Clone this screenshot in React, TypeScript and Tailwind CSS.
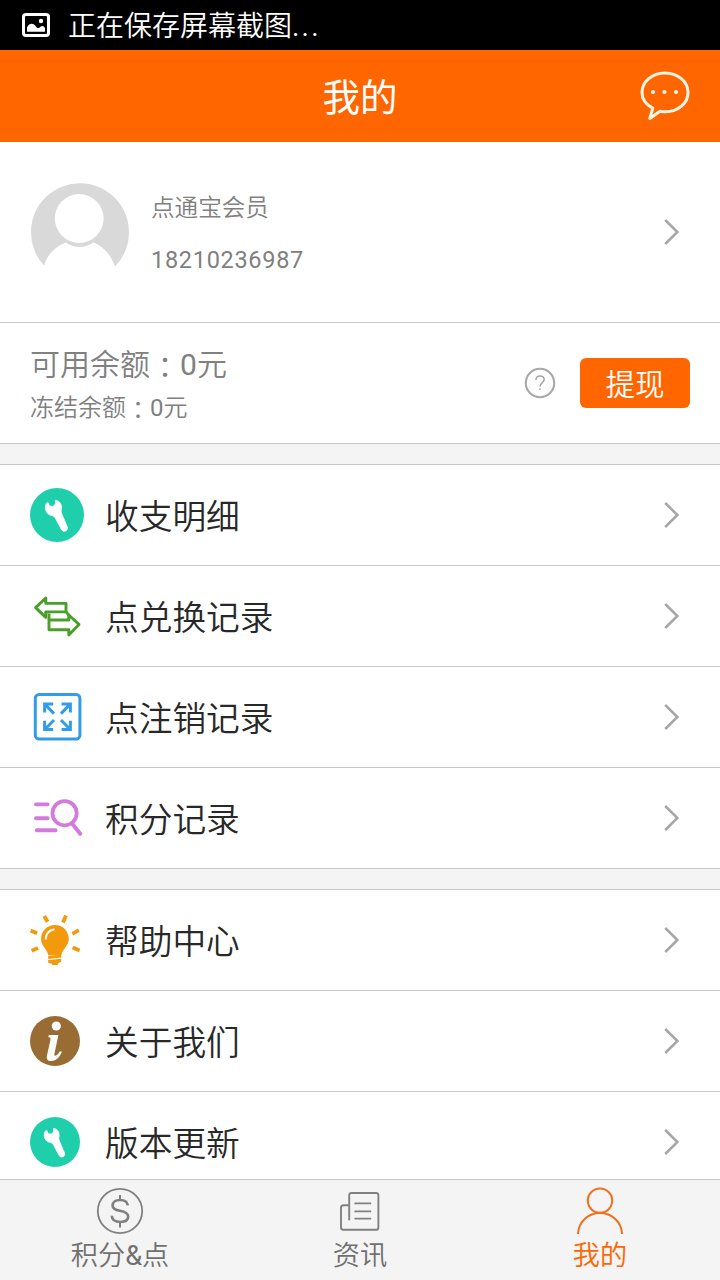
import React from 'react';

interface IconProps {
    size: number;
}

interface MenuItem {
    label: string;
    Icon: React.FC<IconProps>;
}

interface TabItem {
    label: React.ReactNode;
    icon: React.ReactNode;
    active?: boolean;
}

const WrenchIcon: React.FC<IconProps> = ({ size }) => (
    <svg width={size} height={size} viewBox="0 0 54 54">
        <circle cx="27" cy="27" r="27" fill="#1fcfab" />
        <path
            d="M25.4 12.2 C30 13 32 17 31.4 20.5 C31 22.8 31 24 31.8 26 L37.2 38.6 A3.2 3.2 0 0 1 31.4 41.4 L25.6 30.6 C24.6 28.6 23.6 27.8 21.4 27.4 C16.4 26.6 13.8 20.4 16.4 15.4 L18 14.4 L19.6 18.2 L23 18.4 L25.6 15.8 Z"
            fill="#fff"
            stroke="#fff"
            strokeWidth="0.8"
            strokeLinejoin="round"
        />
    </svg>
);

const ExchangeIcon: React.FC<IconProps> = ({ size }) => (
    <svg width={size} height={size} viewBox="0 0 54 54" fill="none" stroke="#4a9f28" strokeWidth="2.9" strokeLinejoin="round">
        <path d="M5.6 18.6 L15.8 9 V14.4 H36 V22.9 H15.8 V28.4 Z" />
        <path d="M49 35.4 L38.8 26 V31 H19 V40.8 H38.8 V46 Z" />
        <path d="M19 31 V24.5 M36 22.9 L38.8 26" />
    </svg>
);

const ExpandIcon: React.FC<IconProps> = ({ size }) => (
    <svg width={size} height={size} viewBox="0 0 54 54" fill="none" stroke="#339cea">
        <rect x="5.3" y="4.4" width="44.6" height="44.6" rx="3.8" strokeWidth="3" />
        <g strokeWidth="3">
            <path d="M14.6 22.6 V14 H23.2 M15 14.4 L24 23.6" />
            <path d="M31.6 14 H40.4 V22.6 M40 14.4 L31 23.6" />
            <path d="M14.6 30.8 V39.6 H23.2 M15 39.2 L24 30" />
            <path d="M31.6 39.6 H40.4 V30.8 M40 39.2 L31 30" />
        </g>
    </svg>
);

const RecordSearchIcon: React.FC<IconProps> = ({ size }) => (
    <svg width={size} height={size} viewBox="0 0 54 54" fill="none" stroke="#d27bdc" strokeWidth="3.9" strokeLinecap="round">
        <path d="M6 13.4 H17.6 M6 27.2 H17.6 M6.8 39.2 H25.6" />
        <circle cx="34.6" cy="22.2" r="12.1" strokeWidth="3.8" />
        <path d="M42.3 32.8 L50.2 42.8" strokeWidth="4" />
    </svg>
);

const BulbIcon: React.FC<IconProps> = ({ size }) => (
    <svg width={size} height={size} viewBox="0 0 50 50" fill="none">
        <path
            d="M25 10 C32.6 10 38.8 16 38.8 24 C38.8 31 32.2 34 31.4 40.2 H18.2 C17.4 34 11 31 11 24 C11 16 17.2 10 25 10 Z"
            fill="#f39a0c"
        />
        <path d="M18.2 41 L31.2 39.8 V42.6 L18.2 44 Z M18.2 45 L31.2 43.7 V46.8 L28.6 48 L27.6 50 H22.4 L21.4 48.6 L18.2 48 Z" fill="#f39a0c" />
        <path d="M15.8 23.8 C16 18.8 19 15.6 23.8 14.6" stroke="#fff" strokeWidth="2" strokeLinecap="round" />
        <path
            d="M14.2 1 L17.6 6.8 M36 0.6 L33 7.4 M0.6 15.6 L7.2 18.2 M48.8 15.2 L42.4 18.8 M1.6 35.8 L8 33 M42.6 32.4 L49.6 35.4"
            stroke="#f39a0c"
            strokeWidth="3.8"
        />
    </svg>
);

const InfoIcon: React.FC<IconProps> = ({ size }) => (
    <svg width={size} height={size} viewBox="0 0 50 50">
        <circle cx="25" cy="25" r="25" fill="#996c33" />
        <circle cx="26.3" cy="10" r="4.6" fill="#fff" />
        <path
            d="M18.8 19 H28.4 L24.4 38 C24 40.8 26.6 40.4 29.8 35.4 L32 35.6 C29.4 42.4 25.4 45 21.2 45 C17.4 45 16.2 42.6 17 39.4 L20.4 24 C20.8 21.8 20.6 21.4 18.4 21.2 Z"
            fill="#fff"
        />
    </svg>
);

const Chevron = () => (
    <svg width="17" height="28" viewBox="0 0 17 28" fill="none" stroke="#a6a6a6" strokeWidth="2.5">
        <path d="M2.2 2 L14.4 14 L2.2 26" />
    </svg>
);

const recordItems: MenuItem[] = [
    { label: '收支明细', Icon: WrenchIcon },
    { label: '点兑换记录', Icon: ExchangeIcon },
    { label: '点注销记录', Icon: ExpandIcon },
    { label: '积分记录', Icon: RecordSearchIcon },
];

const aboutItems: MenuItem[] = [
    { label: '帮助中心', Icon: BulbIcon },
    { label: '关于我们', Icon: InfoIcon },
    { label: '版本更新', Icon: WrenchIcon },
];

const tabs: TabItem[] = [
    {
        label: (
            <>
                积分<span className="font-normal">&amp;</span>点
            </>
        ),
        icon: (
            <svg width="48" height="48" viewBox="0 0 48 48" fill="none" stroke="#808080" strokeWidth="1.8">
                <circle cx="24" cy="24" r="22.2" />
                <path
                    d="M31.8 18.4 C31.4 15 28.4 13 24 13 C19.4 13 16.6 15.2 16.6 18.4 C16.6 21.6 19 22.8 24 23.8 C29.4 24.8 32.2 26.2 32.2 29.6 C32.2 33 29 35 24.2 35 C19.2 35 16 32.8 15.8 28.8"
                    strokeWidth="2.7"
                />
                <path d="M24 8 V13 M24 35 V40.6" strokeWidth="2" />
            </svg>
        ),
    },
    {
        label: '资讯',
        icon: (
            <svg width="48" height="48" viewBox="0 0 48 48" fill="none" stroke="#808080" strokeWidth="1.9" strokeLinecap="round">
                <path d="M13.2 32.5 V8.4 Q13.2 6 15.6 6 H40 Q42.4 6 42.4 8.4 V40.4 Q42.4 42.8 40 42.8 H7.6 Q5 42.8 5 40.2 V20.8 Q5 18.2 7.6 18.2 H12.4" />
                <path d="M19.2 16.4 H34.4 M19.2 24.4 H34.4 M19.2 31.6 H34.4" />
            </svg>
        ),
    },
    {
        label: '我的',
        active: true,
        icon: (
            <svg width="48" height="48" viewBox="0 0 48 48" fill="none" stroke="#ee701c" strokeWidth="2">
                <circle cx="24" cy="13.6" r="12.2" />
                <path d="M1.9 47 C2.5 35 12 26 24 26 C36 26 45.5 35 46.1 47" />
            </svg>
        ),
    },
];

const MenuGroup: React.FC<{ items: MenuItem[]; iconSize: number }> = ({ items, iconSize }) => (
    <div className="border-t border-[#c8c8c8] bg-white">
        {items.map(({ label, Icon }) => (
            <div key={label} className="flex h-[101px] items-center border-b border-[#c8c8c8] pl-[30px] pr-10">
                <div className="w-[75px] shrink-0">
                    <Icon size={iconSize} />
                </div>
                <span className="flex-1 pt-[5px] text-[33.7px] leading-none text-[#282828]">{label}</span>
                <Chevron />
            </div>
        ))}
    </div>
);

const BalanceLine: React.FC<{ label: string; amount: number }> = ({ label, amount }) => (
    <>
        {label}
        {/* Двоеточие по центру знака */}
        <span className="align-[-3px] font-['Noto_Sans_CJK_TC',sans-serif] leading-none">：</span>
        <span className="font-normal">{amount}</span>元
    </>
);

const App: React.FC = () => {
    return (
        <div className="flex h-screen w-full flex-col overflow-hidden bg-[#f4f4f4] font-['Roboto','Noto_Sans_CJK_SC',sans-serif] font-[350]">
            {/* Системная строка */}
            <div className="flex h-[50px] shrink-0 items-center bg-black pl-[22px] text-white">
                <svg width="28" height="24" viewBox="0 0 28 24" fill="none">
                    <rect x="1.5" y="1.5" width="25" height="21" rx="2.5" stroke="#fff" strokeWidth="3" />
                    <path d="M5 18.8 V14.6 C6.6 11 10.4 9 13.6 13 C15.4 15.8 17 15.4 18.4 13.8 C20.4 12.2 22 13.2 23 15 V18.8 Z" fill="#fff" />
                    <circle cx="19" cy="8" r="2.2" fill="#fff" />
                </svg>
                <span className="ml-[18px] pt-[3px] text-[28px] leading-none">
                    正在保存屏幕截图<span className="font-normal tracking-[2.2px]">...</span>
                </span>
            </div>

            {/* Шапка */}
            <div className="grid h-[92px] shrink-0 grid-cols-3 items-center bg-[#ff6600] px-[30px] text-white">
                <h1 className="col-start-2 pt-[5px] text-center text-[37.5px] leading-none font-normal">我的</h1>
                <svg className="mb-0.5 justify-self-end" width="50" height="50" viewBox="0 0 50 50" fill="none">
                    <path
                        d="M12.8 38.2 C5.6 34.6 2 28.8 2 22.6 C2 11.6 12.2 3 25 3 C37.8 3 48 11.6 48 22.4 C48 33.4 37.8 41.8 25.6 41.8 C23.6 41.8 21.8 41.6 20 41.2 L9.8 48.4 Z"
                        stroke="#fff5e6"
                        strokeWidth="3"
                        strokeLinejoin="round"
                    />
                    <g fill="#fff5e6">
                        <circle cx="13" cy="22" r="2.1" />
                        <circle cx="24.5" cy="22" r="2.1" />
                        <circle cx="36" cy="22" r="2.1" />
                    </g>
                </svg>
            </div>

            <main className="flex min-h-0 flex-1 flex-col gap-5 overflow-hidden">
                <div className="shrink-0 bg-white">
                    {/* Профиль */}
                    <div className="flex h-[181px] items-center border-b border-[#c8c8c8] pl-[30px] pr-10">
                        <svg className="mb-0.5" width="100" height="100" viewBox="0 0 100 100">
                            <path
                                d="M14 84.5 A49 49 0 1 1 85 85.5 C80.5 73 73 65 63.5 61.5 C54 67.5 45 67.5 35.5 61.5 C25 65.5 18 73 14 84.5 Z"
                                fill="#d9d9d9"
                            />
                            <circle cx="49.2" cy="37.5" r="24.4" fill="#fff" />
                        </svg>
                        <div className="ml-[21px] flex-1 pt-[3px] text-[#808080]">
                            <p className="text-[23.6px] leading-[52px]">点通宝会员</p>
                            <p className="text-[23.5px] leading-[52px] font-normal tracking-[0.7px]">18210236987</p>
                        </div>
                        <Chevron />
                    </div>

                    {/* Баланс */}
                    <div className="flex h-[121px] items-center border-b border-[#c8c8c8] px-[30px]">
                        <div className="flex-1 pt-[5px] text-[#808080]">
                            <p className="text-[30px] leading-[44px]">
                                <BalanceLine label="可用余额" amount={0} />
                            </p>
                            <p className="text-2xl leading-[42px]">
                                <BalanceLine label="冻结余额" amount={0} />
                            </p>
                        </div>
                        <svg width="32" height="32" viewBox="0 0 32 32" fill="none" stroke="#a8a8a8">
                            <circle cx="16" cy="16" r="14.2" strokeWidth="2.1" />
                            <path d="M12 13 C12 7.8 20.2 7.8 20.2 12.6 C20.2 15.6 16 15.6 16 19.6 M16 21.4 V23" strokeWidth="1.6" />
                        </svg>
                        <button className="ml-6 h-[50px] w-[110px] rounded-md bg-[#ff6600] pt-[5px] text-[29.5px] leading-none text-white">
                            提现
                        </button>
                    </div>
                </div>

                <MenuGroup items={recordItems} iconSize={54} />
                <MenuGroup items={aboutItems} iconSize={50} />
            </main>

            {/* Нижняя навигация */}
            <nav className="grid h-[101px] shrink-0 grid-cols-3 border-t border-[#c8c8c8] bg-[#f4f4f4]">
                {tabs.map((tab, index) => (
                    <div
                        key={index}
                        className={`flex flex-col items-center pt-[7px] ${tab.active ? 'text-[#ff6600]' : 'text-[#707070]'}`}
                    >
                        {tab.icon}
                        <span className="mt-2 text-[27.2px] leading-none">{tab.label}</span>
                    </div>
                ))}
            </nav>
        </div>
    );
};

export default App;
